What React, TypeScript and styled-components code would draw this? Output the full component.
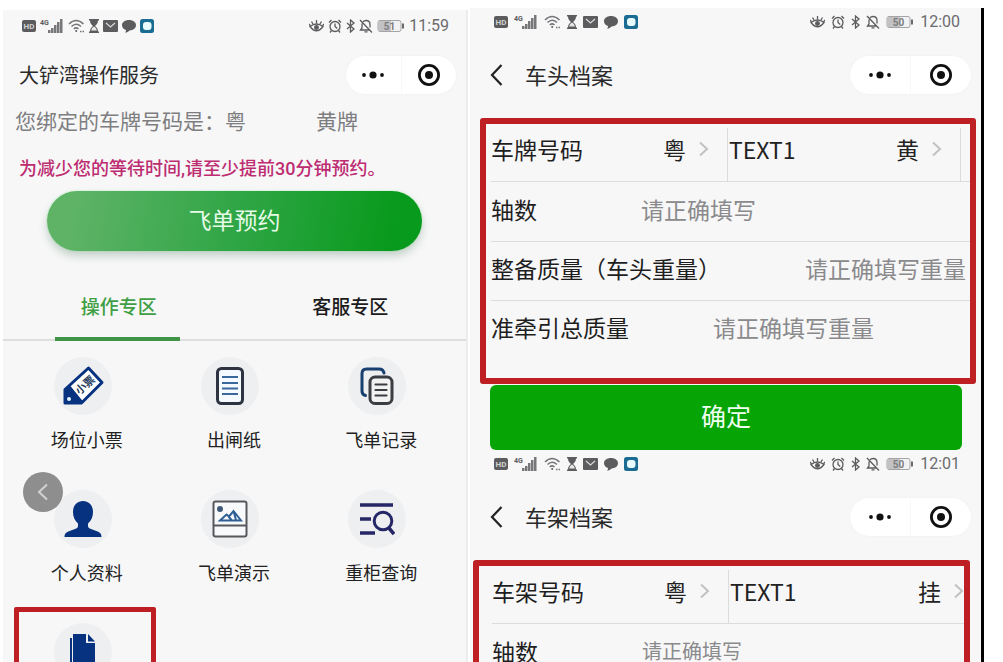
import React from "react";
import styled, { createGlobalStyle, css } from "styled-components";

const Global = createGlobalStyle`
  * { box-sizing: border-box; }
  body {
    margin: 0;
    background: #fff;
    color: #222;
    font-family: "Noto Sans CJK SC", "Noto Sans", sans-serif;
  }
  button, input, select { font: inherit; color: inherit; }
`;

const RED = "#bd1f22";
const NAVY = "#06327f";

/* ---------- page frame ---------- */

const Page = styled.div`
  display: grid;
  grid-template-columns: minmax(0, 468fr) minmax(0, 516fr);
  height: 100vh;
  overflow: hidden;
  padding: 8px 19px 0 0;
`;

const HomePhone = styled.main`
  position: relative;
  margin: 2px 0 0 3px;
  background: #f7f7f8;
  border-right: 2px solid #ececee;
`;

const FormPhones = styled.section`
  margin-left: 2px;
  background: #f7f7f8;
  border-right: 3px solid #000;
`;

/* ---------- status bar ---------- */

const StatusRow = styled.div<{ $roomy?: boolean }>`
  display: flex;
  align-items: center;
  justify-content: space-between;
  height: ${(p) => (p.$roomy ? 28 : 32)}px;
  padding: ${(p) => (p.$roomy ? "0 21px 0 24px" : "0 17px 0 19px")};
  --gap: ${(p) => (p.$roomy ? 6 : 4)}px;
`;

const IconGroup = styled.div`
  display: flex;
  align-items: center;
  gap: var(--gap);
  color: #5c5c5e;
  svg { display: block; flex: none; }
`;

const Clock = styled.time`
  font-family: Roboto, sans-serif;
  font-size: 16px;
  line-height: 20px;
  font-weight: 400;
  color: #6c6c6e;
`;

const tiny = { fontFamily: "Roboto, sans-serif", fontWeight: 700 } as const;

function StatusBar({ time, charge, roomy }: { time: string; charge: string; roomy?: boolean }) {
  return (
    <StatusRow $roomy={roomy}>
      <IconGroup>
        <svg width="14" height="14" viewBox="0 0 14 14">
          <rect y="1" width="14" height="12" rx="2" fill="currentColor" />
          <text x="7" y="10" fontSize="8" textAnchor="middle" fill="#d0d0d0" {...tiny}>HD</text>
        </svg>
        <svg width="24" height="14" viewBox="0 0 24 14" fill="currentColor">
          <text x="0" y="6" fontSize="7" {...tiny}>4G</text>
          <g fill="#77777a">
            <rect x="8" y="11" width="2.500" height="3" />
            <rect x="11" y="9" width="2.500" height="5" />
            <rect x="14" y="6" width="2.500" height="8" />
            <rect x="17" y="3" width="2.500" height="11" />
            <rect x="20" y="0" width="2.500" height="14" />
          </g>
        </svg>
        <svg width="17" height="14" viewBox="0 0 17 14" fill="none" stroke="#77777a" strokeWidth="1.500">
          <path d="M1 5Q8 -2 15.500 5M3.500 7.500Q8 3 13 7.500M5.800 10Q8 7.800 10.500 10" />
          <circle cx="8.200" cy="12" r="1" fill="currentColor" stroke="none" />
          <path d="M12 12.500h4" strokeDasharray="1.500 1" />
        </svg>
        <svg width="10" height="14" viewBox="0 0 10 14">
          <path d="M0 0h10v1.500H9C9 4.500 7.500 5.500 6 7c1.500 1.500 3 2.500 3 5.500h1V14H0v-1.500h1C1 9.500 2.500 8.500 4 7 2.500 5.500 1 4.500 1 1.500H0z" fill="currentColor" />
          <path d="M5 7.500c1.500 1 2.800 2.500 2.800 4h-5.600C2.200 10 3.500 8.500 5 7.500z" fill="#e8e8e9" />
        </svg>
        <svg width="15" height="14" viewBox="0 0 15 14">
          <rect y="1" width="15" height="12" rx="1" fill="currentColor" />
          <path d="M3 4l4.500 4L12 4" fill="none" stroke="#d8d8d8" strokeWidth="1.300" />
        </svg>
        <svg width="14" height="14" viewBox="0 0 14 14" fill="currentColor">
          <path d="M7 1c4 0 7 2.200 7 5.200s-3 5-6.300 5.200C6.500 12.500 5 13.500 3 13.500c.8-.8 1-1.700 1-2.600C1.500 10.100 0 8.500 0 6.200 0 3.200 3 1 7 1z" />
        </svg>
        <svg width="14" height="14" viewBox="0 0 14 14">
          <rect width="14" height="14" rx="2.500" fill="#1a6c92" />
          <rect x="3" y="3" width="8.500" height="8" rx="3" fill="#e8fbff" />
        </svg>
      </IconGroup>
      <IconGroup>
        <svg width="15" height="14" viewBox="0 0 15 14" fill="none" stroke="currentColor" strokeWidth="1.300">
          <path d="M1 7.500Q7.500 2.500 14 7.500Q7.500 16 1 7.500z" />
          <circle cx="7.500" cy="8.500" r="1.800" fill="currentColor" />
          <path d="M7.500 4.500V1M4 5L2.500 2.500M11 5l1.500-2.500M1.500 7L0 5M13.500 7L15 5" />
        </svg>
        <svg width="14" height="14" viewBox="0 0 14 14" fill="none" stroke="currentColor" strokeWidth="1.300">
          <circle cx="7" cy="7.500" r="5" />
          <path d="M7 4.500v3l2.200 2M1 3.500L3.500 1M13 3.500L10.500 1M3.500 11.500L2 13.500M10.500 11.500l1.500 2" />
        </svg>
        <svg width="9" height="14" viewBox="0 0 9 14" fill="none" stroke="currentColor" strokeWidth="1.300">
          <path d="M1 4l7 6-3.500 3V1L8 4l-7 6" />
        </svg>
        <svg width="14" height="14" viewBox="0 0 14 14" fill="none" stroke="currentColor" strokeWidth="1.300">
          <path d="M4 2.800C5 1.700 6 1.500 7 1.500c2.500 0 4 1.800 4 4v3M3 4.500V9l-1.500 2H11M5.500 12.800h3M1 1l12 12.500" />
        </svg>
        <svg width="28" height="14" viewBox="0 0 28 14">
          <rect x="1" y="1.500" width="23" height="11" rx="2" fill="#f2f2f2" stroke="#a4a4a6" />
          <rect x="1" y="2" width="13" height="10" fill="#c2c2c4" />
          <rect x="25" y="4.500" width="2" height="5" fill="#6a6a6c" />
          <text x="12.500" y="10.500" fontSize="10" textAnchor="middle" fill="#7c7c7e" {...tiny}>{charge}</text>
        </svg>
        <Clock>{time}</Clock>
      </IconGroup>
    </StatusRow>
  );
}

/* ---------- navigation bar ---------- */

const NavRow = styled.header<{ $form?: boolean }>`
  display: flex;
  align-items: center;
  height: ${(p) => (p.$form ? 78 : 66)}px;
  padding: ${(p) => (p.$form ? "0 10px 0 20px" : "0 10px 0 16px")};
`;

const Title = styled.h1<{ $form?: boolean }>`
  flex: 1;
  margin: 0;
  padding-bottom: ${(p) => (p.$form ? 2 : 0)}px;
  font-size: ${(p) => (p.$form ? 22 : 20)}px;
  line-height: 30px;
  font-weight: 400;
  color: #2a2a2a;
`;

const IconButton = styled.button`
  display: flex;
  align-items: center;
  justify-content: center;
  flex: 1;
  padding: 0;
  border: 0;
  background: none;
  cursor: pointer;
`;

const BackButton = styled(IconButton)`
  flex: none;
  margin-right: 22px;
`;

const Capsule = styled.div<{ $form?: boolean }>`
  display: flex;
  width: ${(p) => (p.$form ? 121 : 110)}px;
  height: 38px;
  border-radius: 19px;
  background: #fff;
  box-shadow: 0 0 2px #ececee;
  ${IconButton} + ${IconButton} { border-left: 1px solid #f8f8f8; }
`;

function CapsuleMenu({ form }: { form?: boolean }) {
  return (
    <Capsule $form={form}>
      <IconButton aria-label="更多">
        <svg width="26" height="10" viewBox="0 0 26 10" fill="#111">
          <circle cx="4" cy="5" r="1.900" />
          <circle cx="13" cy="5" r="3.600" />
          <circle cx="22" cy="5" r="1.900" />
        </svg>
      </IconButton>
      <IconButton aria-label="关闭">
        <svg width="24" height="24" viewBox="0 0 24 24">
          <circle cx="12" cy="12" r="9.600" fill="none" stroke="#111" strokeWidth="2.800" />
          <circle cx="12" cy="12" r="4" fill="#111" />
        </svg>
      </IconButton>
    </Capsule>
  );
}

function FormNav({ title }: { title: string }) {
  return (
    <NavRow $form>
      <BackButton aria-label="返回">
        <svg width="13" height="22" viewBox="0 0 13 22" fill="none" stroke="#222" strokeWidth="2.200">
          <path d="M11.500 1L2 11l9.500 10" />
        </svg>
      </BackButton>
      <Title $form>{title}</Title>
      <CapsuleMenu form />
    </NavRow>
  );
}

/* ---------- home screen ---------- */

const BoundPlate = styled.p`
  display: flex;
  gap: 70px;
  margin: 0;
  padding: 0 0 2px 12px;
  font-size: 21px;
  line-height: 24px;
  color: #7e7e80;
`;

const Notice = styled.p`
  margin: 22px 0 0;
  padding-left: 16px;
  font-family: Roboto, "Noto Sans CJK SC", sans-serif;
  font-size: 18px;
  line-height: 26px;
  font-weight: 500;
  color: #bd2c70;
`;

const BookButton = styled.button`
  display: block;
  width: calc(100% - 88px);
  height: 60px;
  margin: 9px 44px 0;
  padding: 0 0 4px;
  border: 0;
  border-radius: 30px;
  background: linear-gradient(100deg, #5eb366 8%, #30a646 50%, #089a1c 92%);
  box-shadow: 0 5px 9px rgba(60, 110, 80, 0.28), 0 0 2px #b4f0b8;
  font-size: 23px;
  line-height: 32px;
  color: #e6fbe6;
  cursor: pointer;
`;

const Tabs = styled.div`
  display: grid;
  grid-template-columns: 1fr 1fr;
  margin-top: 22px;
  border-bottom: 2px solid #dededf;
`;

const Tab = styled.button<{ $active?: boolean }>`
  position: relative;
  height: 66px;
  padding: 0;
  border: 0;
  background: none;
  font-size: 19px;
  line-height: 28px;
  font-weight: 500;
  color: ${(p) => (p.$active ? "#3f9f45" : "#1c1c1c")};
  cursor: pointer;
  ${(p) =>
    p.$active &&
    css`
      &::after {
        content: "";
        position: absolute;
        left: 50%;
        bottom: -2px;
        width: 125px;
        height: 4px;
        margin-left: -64px;
        background: #3f9445;
      }
    `}
`;

const Services = styled.nav`
  display: grid;
  grid-template-columns: repeat(3, 1fr);
  padding: 0 11px 0 10px;
`;

const Service = styled.a<{ $marked?: boolean }>`
  position: relative;
  display: flex;
  flex-direction: column;
  align-items: center;
  gap: 12px;
  height: 133px;
  padding-top: 16px;
  font-size: 18px;
  line-height: 24px;
  color: #222;
  text-decoration: none;
  ${(p) =>
    p.$marked &&
    css`
      &::after {
        content: "";
        position: absolute;
        inset: 0 4px 0 1px;
        border: 5px solid ${RED};
        border-radius: 2px;
      }
    `}
`;

const Disc = styled.span`
  display: flex;
  align-items: center;
  justify-content: center;
  width: 58px;
  height: 58px;
  margin-right: 8px;
  border-radius: 50%;
  background: #eeeff0;
`;

const FloatingBack = styled.button`
  position: absolute;
  left: 20px;
  top: 462px;
  z-index: 1;
  display: flex;
  align-items: center;
  justify-content: center;
  width: 40px;
  height: 40px;
  padding: 0;
  border: 0;
  border-radius: 50%;
  background: #8e8e8e;
  cursor: pointer;
`;

const TicketIcon = () => (
  <svg width="44" height="42" viewBox="0 0 44 42">
    <path d="M27.500 3L41 17.500 20.500 38H4V24.500z" fill="#fff" stroke={NAVY} strokeWidth="3" strokeLinejoin="round" />
    <path d="M4 24.500L9 20.500 22 36.500 20.500 38.500H4z" fill={NAVY} />
    <circle cx="8" cy="34" r="2" fill="#dff1fb" />
    <g transform="rotate(-42 24 20)">
      <text x="24" y="24" fontSize="11" textAnchor="middle" fill="#27405f" fontWeight="700">小票</text>
    </g>
  </svg>
);

const SheetIcon = () => (
  <svg width="30" height="40" viewBox="0 0 30 40" fill="none">
    <rect x="2.500" y="2.500" width="25" height="35" rx="4" fill="#f4faff" stroke="#2d3340" strokeWidth="3" />
    <path d="M7 11h16M7 17h16M7 22.500h16M7 28h16" stroke="#3b689c" strokeWidth="2.200" />
  </svg>
);

const RecordsIcon = () => (
  <svg width="36" height="40" viewBox="0 0 36 40" fill="none" strokeLinecap="round">
    <path d="M6.500 29.500C3.500 29 3 27.500 3 25V7.500C3 4.500 4.500 3 7.500 3H20c3 0 4.500 1.500 5 4" stroke="#173f70" strokeWidth="3" />
    <rect x="11" y="11" width="22" height="26.500" rx="5" fill="#f2f2f3" stroke="#3a3d42" strokeWidth="3" />
    <path d="M16.500 18.500h11M16.500 24h11M16.500 29.500h11" stroke="#3a3d42" strokeWidth="2.200" />
  </svg>
);

const PersonIcon = () => (
  <svg width="38" height="38" viewBox="0 0 38 38" fill={NAVY}>
    <path d="M19 1c6 0 10 4.500 10 11 0 5-2 9-5 11.500v2.500c0 1.500 1 2.200 3 3l6 2.200c3.500 1.300 4.500 3 4.500 5.800h-37C.5 34.200 1.500 32.500 5 31.200L11 29c2-.8 3-1.500 3-3v-2.500C11 21 9 17 9 12 9 5.500 13 1 19 1z" />
  </svg>
);

const DemoIcon = () => (
  <svg width="36" height="38" viewBox="0 0 36 38" fill="none" stroke="#56585c" strokeWidth="2">
    <rect x="1.500" y="1.500" width="33" height="35" rx="2" fill="#f7f9fb" />
    <path d="M1.500 25.500h33" />
    <circle cx="8" cy="9" r="2" fill="#3d5878" stroke="#3d5878" />
    <path d="M8 20.500L14.500 14.500l2.500 2 4.500-5.500L29 20.500zM16.500 16.500l3 3.500M21.500 11l2.500 9" stroke="#2f6095" />
  </svg>
);

const QueryIcon = () => (
  <svg width="36" height="36" viewBox="0 0 36 36" fill="none" stroke="#262766">
    <path d="M1 4h33M1 18h11M1 32h15" strokeWidth="3.600" />
    <circle cx="24" cy="20" r="8.800" strokeWidth="3" />
    <path d="M29.500 26.500L35 33" strokeWidth="3.600" />
  </svg>
);

const FilesIcon = () => (
  <svg width="28" height="38" viewBox="0 0 28 38" fill={NAVY}>
    <path d="M1 5h2v30h19v2H1z" />
    <path d="M4 1h13v9h9v24H4z" />
    <path d="M19 1l7 7.500h-7z" />
  </svg>
);

const services = [
  { label: "场位小票", Icon: TicketIcon },
  { label: "出闸纸", Icon: SheetIcon },
  { label: "飞单记录", Icon: RecordsIcon },
  { label: "个人资料", Icon: PersonIcon },
  { label: "飞单演示", Icon: DemoIcon },
  { label: "重柜查询", Icon: QueryIcon },
  { label: "", Icon: FilesIcon, marked: true },
];

/* ---------- form screens ---------- */

const FormBox = styled.form<{ $wide?: boolean }>`
  margin: ${(p) => (p.$wide ? "4px 11px 0 3px" : "4px 5px 0 10px")};
  padding: ${(p) => (p.$wide ? "0 0 19px 13px" : "0 0 19px 5px")};
  border: 6px solid ${RED};
  border-radius: 3px;
`;

const Row = styled.div`
  display: flex;
  align-items: center;
  gap: 84px;
  height: 59px;
  padding-bottom: 6px;
  font-size: 23px;
  line-height: 34px;
  & + & { border-top: 1px solid #dcdcde; }
`;

const Label = styled.label`
  flex: none;
  min-width: 66px;
  color: #1e1e1e;
`;

const Field = styled.input<{ $small?: boolean }>`
  flex: 1;
  min-width: 0;
  height: 34px;
  padding: 0;
  border: 0;
  outline: 0;
  background: none;
  font-size: ${(p) => (p.$small ? 20 : 23)}px;
  &::placeholder { color: #8a8a8c; opacity: 1; }
`;

const PlateRow = styled.div`
  display: flex;
  height: 58px;
  border-bottom: 1px solid #dcdcde;
  font-size: 23px;
  line-height: 34px;
`;

const PlateCell = styled.div<{ $grow?: boolean; $edge?: boolean }>`
  display: flex;
  align-items: center;
  justify-content: space-between;
  flex: ${(p) => (p.$grow ? "1" : "0 0 237px")};
  min-width: 0;
  margin-top: 4px;
  padding: 0 ${(p) => (p.$grow && !p.$edge ? 0 : 18)}px 12px ${(p) => (p.$grow ? 1 : 0)}px;
  border-right: ${(p) => (p.$grow && !p.$edge ? "0" : "1px solid #dcdcde")};
`;

const Picker = styled.span`
  display: flex;
  align-items: center;
  gap: 12px;
  flex: none;
`;

const Select = styled.select`
  appearance: none;
  width: 23px;
  height: 34px;
  padding: 0;
  border: 0;
  outline: 0;
  background: none;
`;

const Gutter = styled.div`
  flex: 0 0 9px;
`;

function PlatePicker({ label, value }: { label: string; value: string }) {
  return (
    <Picker>
      <Select aria-label={label} defaultValue={value}>
        <option>{value}</option>
      </Select>
      <svg width="11" height="16" viewBox="0 0 11 16" fill="none" stroke="#c2c2c4" strokeWidth="2">
        <path d="M2 1.500L9 8l-7 6.500" />
      </svg>
    </Picker>
  );
}

function PlateFields({ label, kind, id, edge }: { label: string; kind: string; id: string; edge?: boolean }) {
  return (
    <PlateRow>
      <PlateCell>
        <Label htmlFor={id}>{label}</Label>
        <PlatePicker label="省份" value="粤" />
      </PlateCell>
      <PlateCell $grow $edge={edge}>
        <Field id={id} defaultValue="TEXT1" />
        <PlatePicker label="类别" value={kind} />
      </PlateCell>
      {edge && <Gutter />}
    </PlateRow>
  );
}

const Submit = styled.button`
  display: block;
  width: calc(100% - 39px);
  height: 65px;
  margin: 1px 19px 0 20px;
  padding: 0 0 5px;
  border: 0;
  border-radius: 6px;
  background: #06a404;
  font-size: 25px;
  line-height: 36px;
  color: #f0fff0;
  cursor: pointer;
`;

export default function App() {
  return (
    <>
      <Global />
      <Page>
        <HomePhone>
          <StatusBar time="11:59" charge="51" />
          <NavRow>
            <Title>大铲湾操作服务</Title>
            <CapsuleMenu />
          </NavRow>
          <BoundPlate>
            <span>您绑定的车牌号码是：粤</span>
            <span>黄牌</span>
          </BoundPlate>
          <Notice>为减少您的等待时间,请至少提前30分钟预约。</Notice>
          <BookButton>飞单预约</BookButton>
          <Tabs role="tablist">
            <Tab role="tab" aria-selected="true" $active>操作专区</Tab>
            <Tab role="tab" aria-selected="false">客服专区</Tab>
          </Tabs>
          <Services>
            {services.map(({ label, Icon, marked }) => (
              <Service key={label} href="#" $marked={marked}>
                <Disc><Icon /></Disc>
                {label}
              </Service>
            ))}
          </Services>
          <FloatingBack aria-label="上一页">
            <svg width="12" height="18" viewBox="0 0 12 18" fill="none" stroke="#d2d2d2" strokeWidth="2">
              <path d="M10 1.500L2 9l8 7.500" />
            </svg>
          </FloatingBack>
        </HomePhone>

        <FormPhones>
          <StatusBar time="12:00" charge="50" roomy />
          <FormNav title="车头档案" />
          <FormBox id="tractor">
            <PlateFields id="tractor-plate" label="车牌号码" kind="黄" edge />
            <Row>
              <Label htmlFor="tractor-axles">轴数</Label>
              <Field id="tractor-axles" placeholder="请正确填写" />
            </Row>
            <Row>
              <Label htmlFor="tractor-weight">整备质量（车头重量）</Label>
              <Field id="tractor-weight" placeholder="请正确填写重量" />
            </Row>
            <Row>
              <Label htmlFor="tractor-total">准牵引总质量</Label>
              <Field id="tractor-total" placeholder="请正确填写重量" />
            </Row>
          </FormBox>
          <Submit type="submit" form="tractor">确定</Submit>

          <StatusBar time="12:01" charge="50" roomy />
          <FormNav title="车架档案" />
          <FormBox id="trailer" $wide>
            <PlateFields id="trailer-plate" label="车架号码" kind="挂" />
            <Row>
              <Label htmlFor="trailer-axles">轴数</Label>
              <Field id="trailer-axles" placeholder="请正确填写" $small />
            </Row>
          </FormBox>
        </FormPhones>
      </Page>
    </>
  );
}
